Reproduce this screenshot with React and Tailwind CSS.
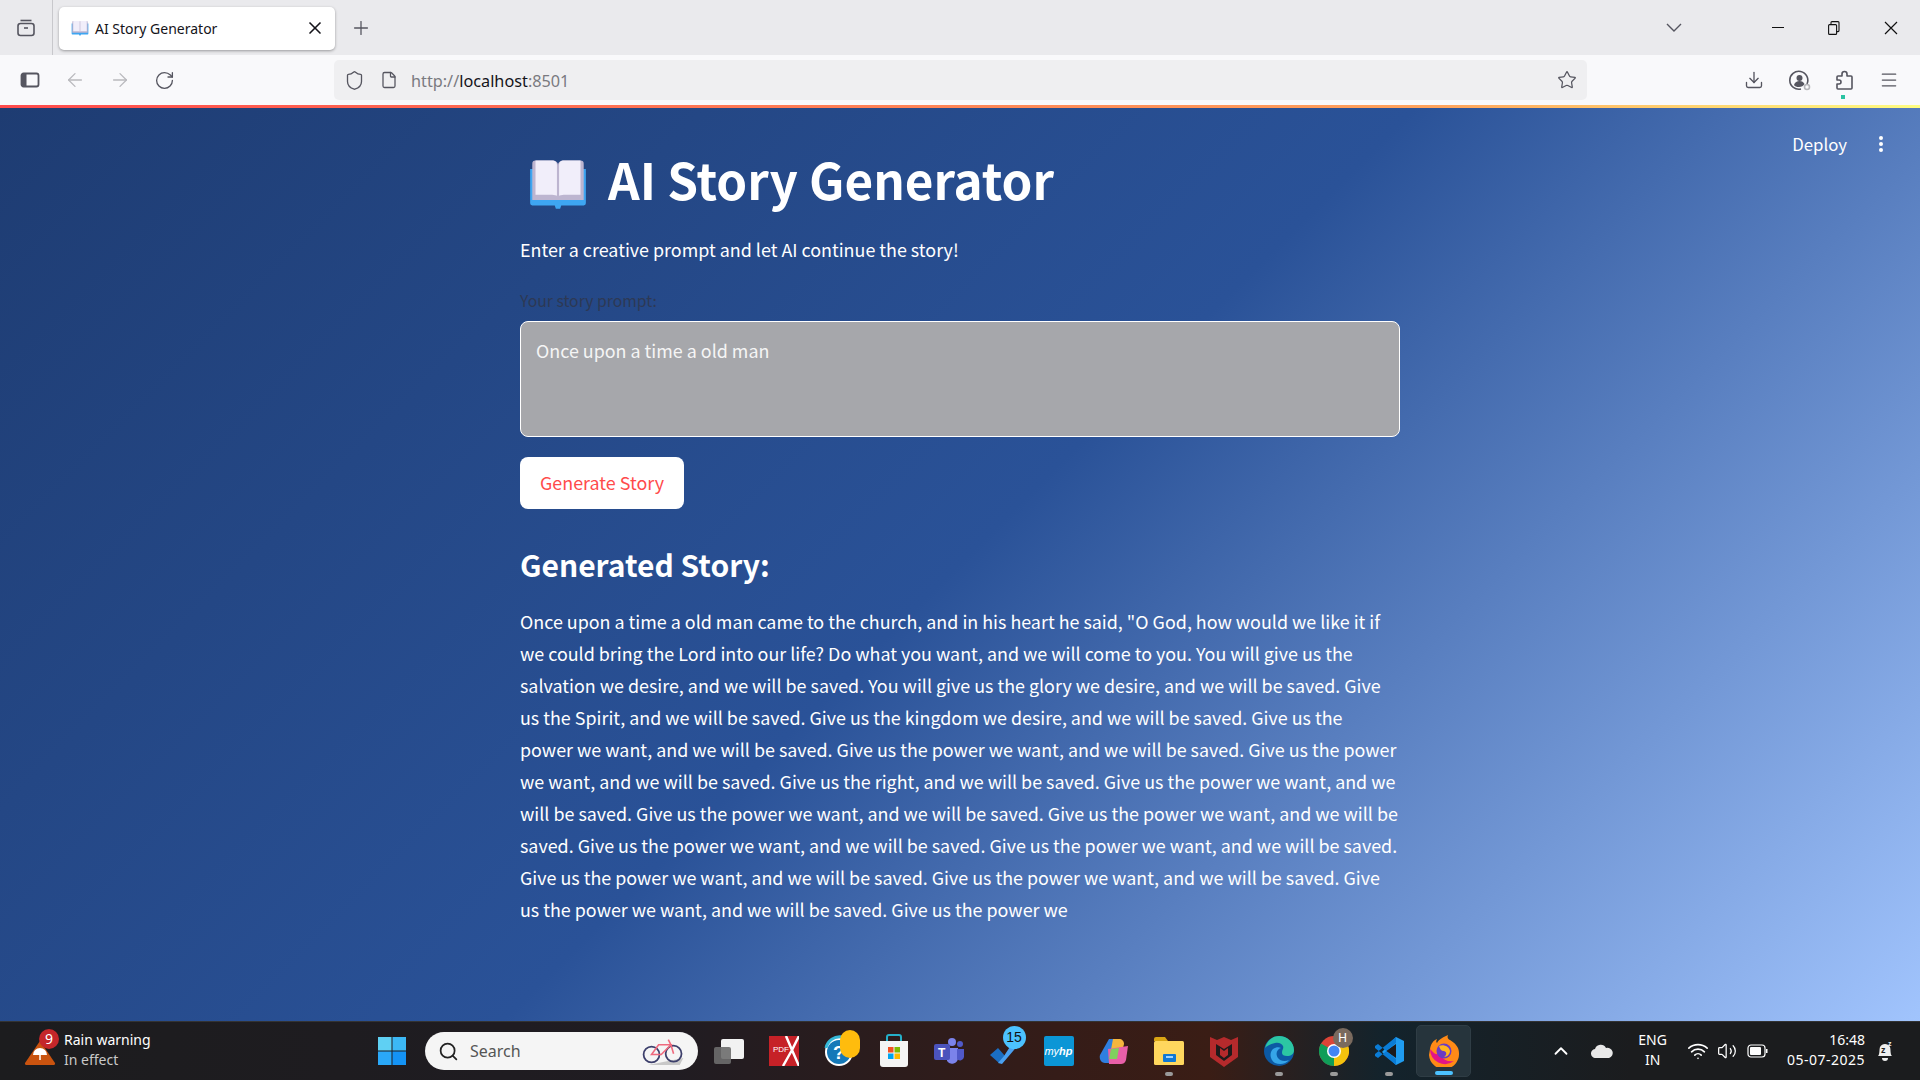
import React from 'react';
import { ArrowLeft, ArrowRight, RotateCw, Shield, File, Star, Download, Plus, X, Menu, ChevronUp, Wifi, Volume2, Search } from 'lucide-react';

const sans = { fontFamily: '"Noto Sans CJK SC", "Noto Sans", sans-serif' };

const story = `Once upon a time a old man came to the church, and in his heart he said, "O God, how would we like it if we could bring the Lord into our life? Do what you want, and we will come to you. You will give us the salvation we desire, and we will be saved. You will give us the glory we desire, and we will be saved. Give us the Spirit, and we will be saved. Give us the kingdom we desire, and we will be saved. Give us the power we want, and we will be saved. Give us the power we want, and we will be saved. Give us the power we want, and we will be saved. Give us the right, and we will be saved. Give us the power we want, and we will be saved. Give us the power we want, and we will be saved. Give us the power we want, and we will be saved. Give us the power we want, and we will be saved. Give us the power we want, and we will be saved. Give us the power we want, and we will be saved. Give us the power we want, and we will be saved. Give us the power we want, and we will be saved. Give us the power we`;

const BookEmoji = ({ size = 56 }) => (
    <svg width={size} height={size} viewBox="0 0 56 56">
        <path d="M2 14h52v32a2 2 0 0 1-2 2H31l-1 3h-4l-1-3H4a2 2 0 0 1-2-2z" fill="#3ea6f2" />
        <path d="M4 9c0-2 1-3 3-3h15c4 0 6 2 6 4v33H4z" fill="#bdb5d0" />
        <path d="M52 9c0-2-1-3-3-3H34c-4 0-6 2-6 4v33h24z" fill="#bdb5d0" />
        <path d="M7 6h15c4 0 5 2 5 4v29c-2-1-4-1-6-1H7z" fill="#f1eefa" />
        <path d="M49 6H34c-4 0-5 2-5 4v29c2-1 4-1 6-1h14z" fill="#f1eefa" />
    </svg>
);

const TabsIcon = () => (
    <svg width="20" height="20" viewBox="0 0 20 20" fill="none" stroke="#55555f" strokeWidth="1.6">
        <rect x="2" y="5.5" width="16" height="12" rx="2.5" />
        <path d="M4.5 2.5h11" />
        <path d="M8 10h4" />
    </svg>
);

const SidebarIcon = () => (
    <svg width="20" height="20" viewBox="0 0 20 20">
        <rect x="1.5" y="3.5" width="17" height="13" rx="2" fill="none" stroke="#55555f" strokeWidth="1.8" />
        <rect x="2" y="4" width="4.5" height="12" fill="#55555f" />
    </svg>
);

const TabBar = () => (
    <div className="h-[55px] bg-[#eaeaed] flex items-center shrink-0">
        <div className="w-[53px] h-full flex items-center justify-center border-r border-[#c8c8cc]"><TabsIcon /></div>
        <div className="ml-[6px] w-[276px] h-[43px] bg-white rounded-[5px] shadow-[0_1px_3px_rgba(0,0,0,0.35)] flex items-center pl-[12px] pr-[10px] mt-[1px]">
            <BookEmoji size={18} />
            <span className="ml-[6px] text-[14px] text-[#15141a] flex-1" style={{ fontFamily: '"Noto Sans", sans-serif' }}>AI Story Generator</span>
            <X size={20} strokeWidth={2} className="text-[#15141a]" />
        </div>
        <Plus size={22} strokeWidth={1.4} className="ml-[15px] text-[#55555f]" />
        <div className="flex-1" />
        <svg width="16" height="9" viewBox="0 0 16 9" fill="none" stroke="#55555f" strokeWidth="1.4" className="mr-[90px]"><path d="M1 1l7 7 7-7" /></svg>
        <div className="w-[12px] h-[1px] bg-[#111] mr-[44px]" />
        <svg width="12" height="14" viewBox="0 0 12 14" fill="none" stroke="#111" strokeWidth="1.1" className="mr-[44px]">
            <rect x="0.6" y="3.6" width="8" height="9.8" rx="1" />
            <path d="M3 3.5V1.6a1 1 0 0 1 1-1h6a1 1 0 0 1 1 1v8a1 1 0 0 1-1 1H8.6" />
        </svg>
        <svg width="14" height="14" viewBox="0 0 14 14" stroke="#111" strokeWidth="1.2" className="mr-[22px]"><path d="M1 1l12 12M13 1L1 13" /></svg>
    </div>
);

const NavBar = () => (
    <div className="h-[50px] bg-[#f9f9fb] flex items-center shrink-0">
        <div className="w-[60px] flex justify-center"><SidebarIcon /></div>
        <ArrowLeft size={22} strokeWidth={1.4} className="ml-[4px] text-[#b9b9bd]" />
        <ArrowRight size={22} strokeWidth={1.4} className="ml-[23px] text-[#b9b9bd]" />
        <RotateCw size={21} strokeWidth={1.5} className="ml-[23px] text-[#55555f]" />
        <div className="ml-[159px] w-[1253px] h-[40px] bg-[#efeff1] rounded-[5px] flex items-center pl-[10px] pr-[10px]">
            <Shield size={21} strokeWidth={1.5} className="text-[#55555f]" />
            <File size={18} strokeWidth={1.7} className="ml-[15px] text-[#55555f]" />
            <span className="ml-[13px] mt-[2px] text-[16.250px] text-[#7a7a80]" style={{ fontFamily: '"Noto Sans", sans-serif' }}>http://<span className="text-[#15141a]">localhost</span>:8501</span>
            <div className="flex-1" />
            <Star size={20} strokeWidth={1.5} className="text-[#55555f]" />
        </div>
        <div className="flex-1" />
        <Download size={20} strokeWidth={1.6} className="text-[#55555f]" />
        <div className="relative ml-[25px] w-[22px] h-[22px]">
            <svg width="22" height="22" viewBox="0 0 22 22" fill="none" stroke="#55555f" strokeWidth="1.6">
                <path d="M18 15a9 9 0 1 0-6 5" />
                <circle cx="10.5" cy="9" r="3" fill="#55555f" stroke="none" />
                <path d="M5 16c1-3 3-4 5.500-4s4 1 5 3c-1 2-3 3-5.500 3S6 17.500 5 16z" fill="#55555f" stroke="none" />
                <circle cx="18" cy="18" r="2.500" stroke="#b5b5b9" />
            </svg>
        </div>
        <div className="relative ml-[24px] w-[20px] h-[20px]">
            <svg width="20" height="22" viewBox="0 0 20 22" fill="none" stroke="#55555f" strokeWidth="1.6" strokeLinejoin="round">
                <path d="M3 19a1 1 0 0 1-1-1v-4h2a2 2 0 0 0 0-4H2V7a1 1 0 0 1 1-1h4V4a2.500 2.500 0 0 1 5 0v2h4a1 1 0 0 1 1 1v11a1 1 0 0 1-1 1z" />
            </svg>
            <div className="absolute left-[6px] top-[25px] w-[4px] h-[4px] bg-[#2ac3a2]" />
        </div>
        <Menu size={20} strokeWidth={1.5} className="ml-[24px] mr-[21px] text-[#55555f]" />
    </div>
);

const Main = () => (
    <main className="relative flex-1 overflow-hidden bg-[linear-gradient(135deg,#1e3c72_0%,#2a5298_50%,#a1c4fd_100%)] text-white" style={sans}>
        <div className="absolute top-0 left-0 right-0 h-[3px] bg-[linear-gradient(90deg,#ff4b4b,#ffa35c_75%,#fffd80)]" />
        <div className="absolute top-[26px] right-[36px] flex items-center">
            <span className="text-[16.800px] leading-[24px] mt-[1px] mr-[31px]">Deploy</span>
            <svg width="6" height="18" viewBox="0 0 6 18" fill="#fff"><circle cx="3" cy="3" r="2" /><circle cx="3" cy="9" r="2" /><circle cx="3" cy="15" r="2" /></svg>
        </div>
        <div className="w-[880px] mx-auto flex flex-col pt-[42px]">
            <h1 className="flex items-center gap-[20px] text-[49.400px] leading-[64px] font-bold h-[64px]">
                <span className="ml-[8px] mt-[10px]"><BookEmoji size={60} /></span>
                AI Story Generator
            </h1>
            <p className="mt-[22px] text-[17.900px] leading-[32px]">Enter a creative prompt and let AI continue the story!</p>
            <label className="mt-[24px] text-[15.750px] leading-[24px] text-[#31333f] opacity-70">Your story prompt:</label>
            <textarea readOnly value="Once upon a time a old man" className="mt-[8px] h-[116px] w-full resize-none bg-[#a6a7ab] border border-white rounded-[8px] px-[15px] py-[12px] text-[17.900px] leading-[32px] text-[#f5f5f5] outline-none" style={sans} />
            <button className="mt-[20px] w-[164px] h-[52px] pb-[1px] bg-white rounded-[8px] text-[17.900px] text-[#ff4b4b]" style={sans}>Generate Story</button>
            <h2 className="mt-[34px] text-[30px] leading-[42px] font-semibold">Generated Story:</h2>
            <p className="mt-[20px] pr-[1px] text-[17.900px] leading-[32px]">{story}</p>
        </div>
    </main>
);

const Slot = ({ children, dot, active }) => (
    <div className={`relative w-[55px] h-[52px] flex items-center justify-center rounded-[5px] ${active ? 'bg-[#26343c] border border-[#2f3d45]' : ''}`}>
        {children}
        {dot && <div className="absolute bottom-[1px] left-1/2 -translate-x-1/2 w-[8px] h-[4px] rounded-full bg-[#9a9a9a]" />}
        {active && <div className="absolute bottom-[1px] left-1/2 -translate-x-1/2 w-[18px] h-[4px] rounded-full bg-[#4cc2ff]" />}
    </div>
);

const Apps = () => (
    <>
        <Slot>
            <svg width="32" height="30" viewBox="0 0 32 30">
                <rect x="8" y="3" width="23" height="20" rx="2" fill="#f2f2f2" />
                <rect x="1" y="11" width="17" height="17" rx="2" fill="#6d6d6d" opacity="0.9" />
            </svg>
        </Slot>
        <Slot>
            <svg width="30" height="30" viewBox="0 0 30 30">
                <rect width="30" height="30" fill="#c62127" />
                <path d="M17 0l6 14 7-14M23 14l7 16M23 14L14 30" fill="none" stroke="#fff" strokeWidth="2.500" />
                <text x="4" y="16" fontSize="8" fill="#fff" fontFamily="Liberation Sans">PDF</text>
            </svg>
        </Slot>
        <Slot>
            <div className="relative">
                <svg width="30" height="34" viewBox="0 0 30 34">
                    <circle cx="15" cy="18" r="14" fill="#fff" />
                    <circle cx="15" cy="18" r="12" fill="#1579b8" />
                    <path d="M18 3a14 14 0 0 0-16 11" stroke="#35b8d8" strokeWidth="3" fill="none" />
                    <text x="9" y="25" fontSize="19" fontWeight="700" fill="#fff" fontFamily="Liberation Sans">?</text>
                </svg>
                <div className="absolute -top-[4px] left-[16px] w-[20px] h-[28px] rounded-full bg-[#ffbc0d]" />
            </div>
        </Slot>
        <Slot>
            <svg width="30" height="34" viewBox="0 0 30 34">
                <path d="M8 7V3a2 2 0 0 1 2-2h10a2 2 0 0 1 2 2v4" fill="none" stroke="#25b0c9" strokeWidth="2" />
                <path d="M1 7h28v23a3 3 0 0 1-3 3H4a3 3 0 0 1-3-3z" fill="#f4f4f4" />
                <rect x="9" y="13" width="5.500" height="5.500" fill="#f25022" />
                <rect x="15.500" y="13" width="5.500" height="5.500" fill="#7fba00" />
                <rect x="9" y="19.500" width="5.500" height="5.500" fill="#00a4ef" />
                <rect x="15.500" y="19.500" width="5.500" height="5.500" fill="#ffb900" />
            </svg>
        </Slot>
        <Slot>
            <svg width="32" height="28" viewBox="0 0 32 28">
                <circle cx="19" cy="5" r="4" fill="#7b83eb" />
                <circle cx="27" cy="7" r="3" fill="#5059c9" />
                <path d="M14 11h11v10a6 6 0 0 1-11 3z" fill="#7b83eb" />
                <path d="M24 12h7v8a4 4 0 0 1-7 2z" fill="#5059c9" />
                <rect x="1" y="7" width="16" height="16" rx="2" fill="#4b53bc" />
                <text x="5" y="20" fontSize="12" fontWeight="700" fill="#fff" fontFamily="Liberation Sans">T</text>
            </svg>
        </Slot>
        <Slot>
            <div className="relative">
                <svg width="30" height="28" viewBox="0 0 30 28">
                    <path d="M1 18l8-7 7 8-6 7z" fill="#1b6ec2" />
                    <path d="M9 26l6-7L26 2l4 5-17 20z" fill="#4aa0f0" />
                </svg>
                <div className="absolute -top-[11px] left-[14px] w-[23px] h-[23px] rounded-full bg-[#4cc2ff] text-[#111] text-[14px] leading-[23px] text-center" style={{ fontFamily: '"Liberation Sans", sans-serif' }}>15</div>
            </div>
        </Slot>
        <Slot>
            <div className="w-[30px] h-[30px] bg-[#0b96d6] rounded-[2px] flex items-center justify-center text-white text-[11px] italic" style={{ fontFamily: '"Liberation Sans", sans-serif' }}>my<b>hp</b></div>
        </Slot>
        <Slot>
            <svg width="30" height="30" viewBox="0 0 30 30">
                <path d="M10 3h6l-4 24H6c-4 0-6-4-5-8z" fill="#2f7fe0" />
                <path d="M14 3h6c3 0 5 2 5 5l-2 8-12 3z" fill="#f5b63e" />
                <path d="M9 13l20-3-2 14c-1 3-3 4-5 4H10z" fill="#e85fa8" />
                <path d="M12 13l8-1-2 11h-8z" fill="#7fd05e" />
            </svg>
        </Slot>
        <Slot dot>
            <svg width="30" height="30" viewBox="0 0 30 30">
                <path d="M0 3a2 2 0 0 1 2-2h9l3 4H0z" fill="#d9a514" />
                <rect x="0" y="5" width="30" height="24" rx="1.500" fill="#ffd75e" />
                <rect x="9" y="18" width="13" height="8" rx="1" fill="#0f78d4" />
                <rect x="12" y="20" width="7" height="2" fill="#9fd3ff" />
            </svg>
        </Slot>
        <Slot>
            <svg width="28" height="33" viewBox="0 0 28 33">
                <path d="M0 2l7 3 7-3 7 3 7-3v20l-14 10L0 22z" fill="#b52a2c" />
                <path d="M6 9l8 5 8-5v11l-8 6-8-6z" fill="#1f1a1a" />
                <path d="M10 13l4 3 4-3v7l-4 3-4-3z" fill="#b52a2c" />
            </svg>
        </Slot>
        <Slot dot>
            <svg width="30" height="30" viewBox="0 0 30 30">
                <circle cx="15" cy="15" r="15" fill="#0c59a4" />
                <path d="M1 12C3 4 9 0 15 0c8 0 15 6 15 14 0 4-3 6-7 6-3 0-5-1-5-3 0-4 2-4 1-7-1-2-4-4-8-3-5 1-8 3-10 5z" fill="#2cc6a3" />
                <path d="M11 27c-5-3-6-10-2-14 3-2 6-2 8-1-4 1-6 6-3 10 2 3 7 4 11 2-3 4-9 5-14 3z" fill="#35a5e8" />
            </svg>
        </Slot>
        <Slot dot>
            <div className="relative">
                <svg width="30" height="30" viewBox="0 0 30 30">
                    <circle cx="15" cy="15" r="15" fill="#db4437" />
                    <path d="M15 15L28 7.500A15 15 0 0 1 15 30z" fill="#f4c20d" />
                    <path d="M15 15L15 30A15 15 0 0 1 2 7.500z" fill="#0f9d58" />
                    <circle cx="15" cy="15" r="7" fill="#fff" />
                    <circle cx="15" cy="15" r="5.500" fill="#4285f4" />
                </svg>
                <div className="absolute -top-[8px] left-[14px] w-[20px] h-[20px] rounded-full bg-[#7a6a5e] text-white text-[12px] leading-[20px] text-center" style={{ fontFamily: '"Liberation Sans", sans-serif' }}>H</div>
            </div>
        </Slot>
        <Slot dot>
            <svg width="30" height="30" viewBox="0 0 30 30">
                <path d="M22 1l8 4v20l-8 4L8 16z" fill="#1f9cf0" />
                <path d="M22 8L12 15l10 7z" fill="#1b1b1e" />
                <path d="M1 10l3-2 18 15v6L1 12zM1 20l3 2 18-15V1L1 18z" fill="#0a7cd6" />
            </svg>
        </Slot>
        <Slot active>
            <svg width="32" height="32" viewBox="0 0 32 32">
                <path d="M2 14C3 8 6 5 9 4c-1 2-1 3 0 4 2-4 7-6 11-8-1 3 0 4 2 5 5 3 9 7 9 13a15 15 0 0 1-30 2z" fill="#ff8a16" />
                <path d="M2 14a15 15 0 0 0 24 12c-6 1-10-1-12-4-3-4-6-2-8-4z" fill="#e31587" />
                <circle cx="16" cy="16" r="7.500" fill="#6a3cc4" />
                <path d="M11 11c4-2 10 0 11 5 0 3-3 6-6 6 3-2 3-5 0-6-3 0-4-2-5-5z" fill="#ffb61e" />
            </svg>
        </Slot>
    </>
);

const Taskbar = () => (
    <div className="h-[59px] shrink-0 flex items-center border-t border-[#333] bg-[linear-gradient(90deg,#1c1c1e_0%,#201c22_35%,#351c18_55%,#3a1d15_63%,#13232c_72%,#1b1c1e_85%)] text-white" style={{ fontFamily: '"Noto Sans", "Open Sans", sans-serif' }}>
        <div className="relative w-[380px] h-full flex items-center pl-[24px] shrink-0">
            <svg width="32" height="32" viewBox="0 0 32 32">
                <path d="M16 6L31 28a1.500 1.500 0 0 1-1 2H2a1.500 1.500 0 0 1-1-2z" fill="#c9530f" />
                <path d="M9 20a7 7 0 0 1 14 0z" fill="#fff" />
                <path d="M16 20v5" stroke="#fff" strokeWidth="1.500" />
            </svg>
            <div className="absolute left-[39px] top-[7px] w-[20px] h-[20px] rounded-full bg-[#c4262a] text-[14px] leading-[20px] text-center">9</div>
            <div className="ml-[8px] text-[14px] leading-[20px] -mt-[2px]">
                <div>Rain warning</div>
                <div className="text-[#c8c8c8]">In effect</div>
            </div>
        </div>
        <svg width="30" height="30" viewBox="0 0 30 30" className="shrink-0 -ml-[3px]">
            <rect x="1" y="1" width="13.500" height="13.500" fill="#5fd0f3" />
            <rect x="15.500" y="1" width="13.500" height="13.500" fill="#3cb8f5" />
            <rect x="1" y="15.500" width="13.500" height="13.500" fill="#2aa8f8" />
            <rect x="15.500" y="15.500" width="13.500" height="13.500" fill="#1493f5" />
        </svg>
        <div className="ml-[18px] w-[273px] h-[38px] bg-[#f5f5f5] rounded-full flex items-center pl-[13px] text-[#555] shrink-0">
            <Search size={21} strokeWidth={2} className="text-[#222]" />
            <span className="ml-[11px] text-[16px]">Search</span>
            <div className="flex-1" />
            <svg width="46" height="30" viewBox="0 0 50 34" fill="none" className="mr-[12px]">
                <path d="M8 33l40-8-4 8z" fill="#c8c8c8" />
                <circle cx="12" cy="21" r="9" stroke="#3c3f6b" strokeWidth="2" />
                <circle cx="37" cy="20" r="9" stroke="#3c3f6b" strokeWidth="2" />
                <path d="M12 21l8-11 14 0-11 11zM34 10l3 10M31 4l3 6" stroke="#ef6a7e" strokeWidth="1.800" />
            </svg>
        </div>
        <div className="ml-[3px] flex items-center shrink-0"><Apps /></div>
        <div className="flex-1" />
        <ChevronUp size={22} strokeWidth={2} className="mr-[19px] text-white" />
        <svg width="22" height="14" viewBox="0 0 22 14" className="mr-[25px]">
            <path d="M5 14a4.500 4.500 0 0 1-1-9 6 6 0 0 1 11-1 5 5 0 0 1 3 10z" fill="#e8e8e8" />
        </svg>
        <div className="text-[14px] leading-[20px] text-center mr-[20px] -mt-[2px]">ENG<br />IN</div>
        <Wifi size={22} strokeWidth={1.8} className="mr-[8px]" />
        <Volume2 size={20} strokeWidth={1.5} className="mr-[10px]" />
        <svg width="21" height="14" viewBox="0 0 21 14" className="mr-[19px]">
            <rect x="1" y="1" width="17" height="12" rx="3" fill="none" stroke="#fff" strokeWidth="1.200" />
            <rect x="3" y="3" width="11" height="8" rx="1" fill="#fff" />
            <rect x="19" y="5" width="1.500" height="4" fill="#fff" />
        </svg>
        <div className="text-[14px] leading-[20px] text-right mr-[11px] -mt-[2px]">16:48<br /><span className="tracking-[0.5px]">05-07-2025</span></div>
        <svg width="18" height="22" viewBox="0 0 18 22" className="mr-[26px]">
            <path d="M2 16c2-2 1-6 2-9 1-2 3-3 5-3s4 1 5 3c1 3 0 7 2 9z" fill="#eee" />
            <path d="M6 18h6a3 3 0 0 1-6 0z" fill="#eee" />
            <text x="5" y="13" fontSize="9" fontWeight="700" fill="#222" fontFamily="Liberation Sans">z</text>
            <text x="12" y="6" fontSize="7" fontWeight="700" fill="#eee" fontFamily="Liberation Sans">z</text>
        </svg>
    </div>
);

export default function App() {
    return (
        <div className="w-[1920px] h-[1080px] flex flex-col overflow-hidden">
            <TabBar />
            <NavBar />
            <Main />
            <Taskbar />
        </div>
    );
}
